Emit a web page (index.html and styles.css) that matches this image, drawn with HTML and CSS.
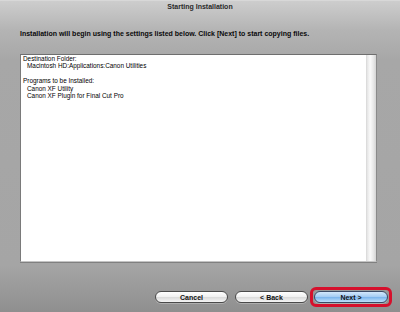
FILE: index.html
```html
<html>

<head>
    <link rel="stylesheet" href="styles.css">
</head>

<body>
    <div class='window'>
        <div class='titlebar'>Starting Installation</div>
        <p class='intro'>Installation will begin using the settings listed below. Click [Next] to start copying files.</p>
        <div class='listbox'>
            <div class='lines'>
                <p>Destination Folder:</p>
                <p class='item'>Macintosh HD:Applications:Canon Utilities</p>
                <p>&nbsp;</p>
                <p>Programs to be Installed:</p>
                <p class='item'>Canon XF Utility</p>
                <p class='item'>Canon XF Plugin for Final Cut Pro</p>
            </div>
            <div class='scroll'></div>
        </div>
        <div class='buttons'>
            <button class='btn'>Cancel</button>
            <button class='btn'>&lt; Back</button>
            <span class='highlight'>
                <button class='btn default'>Next &gt;</button>
            </span>
        </div>
    </div>
</body>

</html>
```

FILE: styles.css
```css
body,
html {
    margin: 0;
}

p {
    margin: 0;
}

.window {
    width: 400px;
    height: 312px;
    display: flex;
    flex-direction: column;
    font-family: "Liberation Sans", Arial, sans-serif;
    color: #111;
    background: linear-gradient(#cecece 0, #b4b4b4 30px, #a7a7a7 60px, #a5a5a5 265px, #8f8f8f 312px);
}

.titlebar {
    height: 13px;
    line-height: 12px;
    text-align: center;
    font-size: 7px;
    font-weight: bold;
    color: #2a2a2a;
    border-top: 1px solid #d8d8d8;
    box-sizing: border-box;
}

.intro {
    padding: 16px 0 0 20px;
    line-height: 10px;
    height: 10px;
    font-size: 7px;
    font-weight: bold;
    color: #0a0a0a;
}

.listbox {
    margin: 15px 23px 0 20px;
    flex: 1;
    display: flex;
    background: #fff;
    border-top: 1px solid #6e6e6e;
    border-left: 1px solid #7a7a7a;
    border-right: 1px solid #8a8a8a;
    border-bottom: 1px solid #c4c4c4;
    box-shadow: 0 1px 0 #808080;
}

.lines {
    flex: 1;
    padding: 0 0 0 2px;
    font-size: 6.4px;
    line-height: 7.4px;
    color: #000;
}

.lines .item {
    padding-left: 4px;
}

.scroll {
    width: 9px;
    border-left: 1px solid #dcdcdc;
    background: linear-gradient(to right, #e4e4e4, #fafafa 35%, #e9e9e9 70%, #d4d4d4);
}

.buttons {
    display: flex;
    justify-content: flex-end;
    align-items: center;
    gap: 7px;
    padding: 25px 8px 5px 0;
}

.btn {
    width: 73px;
    height: 12px;
    padding: 0;
    border: 1px solid #4a4a4a;
    border-radius: 6px;
    font-family: "Liberation Sans", Arial, sans-serif;
    font-size: 7px;
    font-weight: bold;
    color: #111;
    background: linear-gradient(#ffffff, #f1f1f1 45%, #dcdcdc 55%, #f4f4f4);
    box-shadow: 0 1px 0 rgba(255, 255, 255, 0.25);
}

.btn.default {
    width: 74px;
    border-color: #3a4a66;
    background: linear-gradient(#d4e8fb, #a6cdf3 45%, #7fb6ec 55%, #bfe0fb);
}

.highlight {
    display: flex;
    margin-left: -5px;
    padding: 1px;
    border: 3px solid #d6102c;
    border-radius: 6px;
}
```
